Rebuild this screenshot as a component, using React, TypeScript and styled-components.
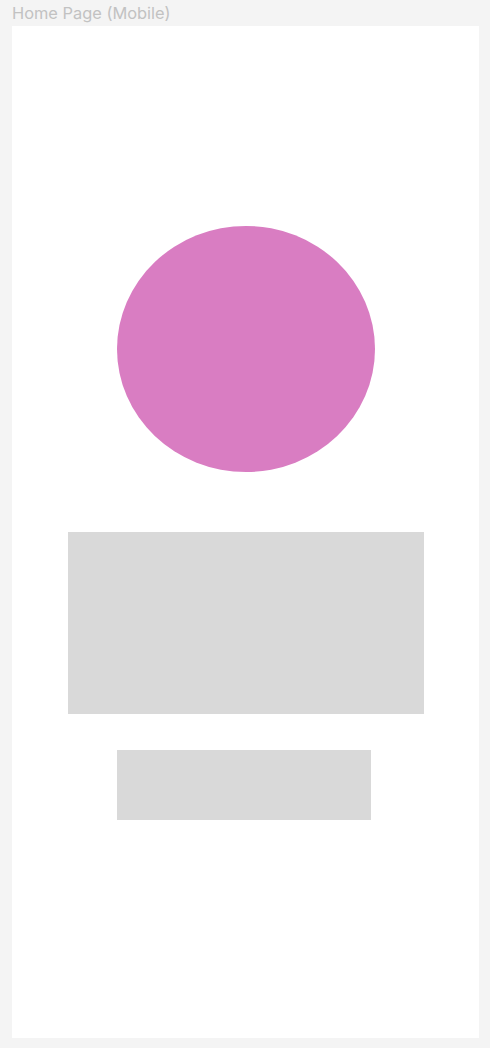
import React from "react";
import styled, { createGlobalStyle } from "styled-components";

const GlobalStyle = createGlobalStyle`
  html, body {
    margin: 0;
    padding: 0;
    background: #f4f4f4;
  }
  body {
    font-family: Inter, "Noto Sans", sans-serif;
  }
`;

const Page = styled.div`
  width: 490px;
  min-height: 1048px;
  background: #f4f4f4;
  display: flex;
  flex-direction: column;
`;

const FrameLabel = styled.div`
  height: 26px;
  line-height: 26px;
  padding-left: 12px;
  font-size: 16.4px;
  color: #c2c2c2;
  white-space: nowrap;
`;

const Frame = styled.div`
  margin-left: 12px;
  width: 467px;
  height: 1012px;
  background: #ffffff;
  display: flex;
  flex-direction: column;
  align-items: center;
  padding-top: 200px;
  box-sizing: border-box;
`;

const Ellipse = styled.div`
  width: 258px;
  height: 246px;
  border-radius: 50%;
  background: #d97dc2;
  flex-shrink: 0;
`;

const Block = styled.div<{ $w: number; $h: number; $gap: number; $offset?: number }>`
  width: ${(p) => p.$w}px;
  height: ${(p) => p.$h}px;
  margin-top: ${(p) => p.$gap}px;
  margin-left: ${(p) => p.$offset ?? 0}px;
  background: #d9d9d9;
  flex-shrink: 0;
`;

export default function App() {
  return (
    <>
      <GlobalStyle />
      <Page>
        <FrameLabel>Home Page (Mobile)</FrameLabel>
        <Frame>
          <Ellipse />
          <Block $w={356} $h={182} $gap={60} />
          <Block $w={254} $h={70} $gap={36} $offset={-3} />
        </Frame>
      </Page>
    </>
  );
}
